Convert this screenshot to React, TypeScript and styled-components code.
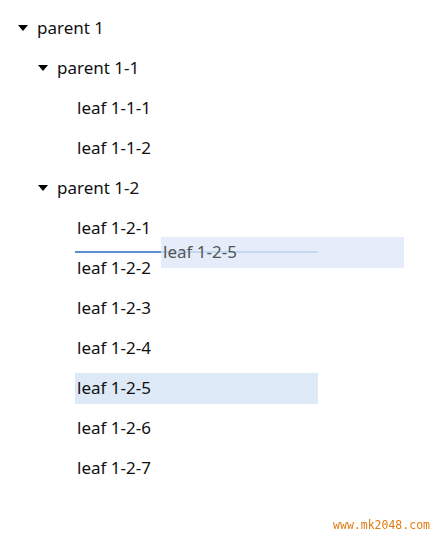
import * as React from "react";
import styled, {createGlobalStyle} from "styled-components";

const GlobalStyle = createGlobalStyle`
    body {
        margin: 8px;
        background: #fff;
        font-family: "Noto Sans", "Open Sans", sans-serif;
        color: #111;
    }
`;

const TreeList = styled.ul`
    position: relative;
    list-style: none;
    margin: 0;
    padding: 0;
`;

const Row = styled.li<{level: number}>`
    display: flex;
    align-items: center;
    height: 40px;
    padding-left: ${props => 10 + props.level * 20}px;
    font-size: 17px;
`;

const Caret = styled.span`
    display: inline-block;
    width: 0;
    height: 0;
    border-left: 5px solid transparent;
    border-right: 5px solid transparent;
    border-top: 6px solid #000;
    margin-right: 9px;
    margin-top: -1px;
`;

const Spacer = styled.span`
    display: inline-block;
    width: 19px;
`;

const Label = styled.span<{selected?: boolean; leaf?: boolean}>`
    display: flex;
    align-items: center;
    box-sizing: border-box;
    height: 31px;
    padding-bottom: 2px;
    width: ${props => props.selected ? "243px" : "auto"};
    margin-left: ${props => props.leaf ? "-2px" : "0"};
    padding-left: ${props => props.leaf ? "2px" : "0"};
    background: ${props => props.selected ? "#dde9f6" : "transparent"};
`;

const DropLine = styled.div`
    position: absolute;
    left: 67px;
    top: 243px;
    width: 243px;
    height: 2px;
    background: #5b8fd2;
`;

const Ghost = styled.div`
    position: absolute;
    left: 153px;
    top: 229px;
    width: 243px;
    height: 31px;
    display: flex;
    align-items: center;
    padding-left: 2px;
    padding-bottom: 2px;
    box-sizing: border-box;
    background: rgba(222, 233, 248, 0.82);
    color: #555;
    font-size: 17px;
`;

const Watermark = styled.div`
    position: fixed;
    right: 4px;
    bottom: 3px;
    font-family: "DejaVu Sans Mono", "Liberation Mono", monospace;
    font-size: 11.5px;
    color: #e07b10;
`;

interface Node {
    label: string;
    level: number;
    parent?: boolean;
    selected?: boolean;
}

const nodes: Node[] = [
    {label: "parent 1", level: 0, parent: true},
    {label: "parent 1-1", level: 1, parent: true},
    {label: "leaf 1-1-1", level: 2},
    {label: "leaf 1-1-2", level: 2},
    {label: "parent 1-2", level: 1, parent: true},
    {label: "leaf 1-2-1", level: 2},
    {label: "leaf 1-2-2", level: 2},
    {label: "leaf 1-2-3", level: 2},
    {label: "leaf 1-2-4", level: 2},
    {label: "leaf 1-2-5", level: 2, selected: true},
    {label: "leaf 1-2-6", level: 2},
    {label: "leaf 1-2-7", level: 2},
];

export default function App() {
    return (
        <>
            <GlobalStyle />
            <TreeList>
                {nodes.map(node => (
                    <Row key={node.label} level={node.level}>
                        {node.parent ? <Caret /> : <Spacer />}
                        <Label selected={node.selected} leaf={!node.parent}>{node.label}</Label>
                    </Row>
                ))}
                <DropLine />
                <Ghost>leaf 1-2-5</Ghost>
            </TreeList>
            <Watermark>www.mk2048.com</Watermark>
        </>
    );
}
